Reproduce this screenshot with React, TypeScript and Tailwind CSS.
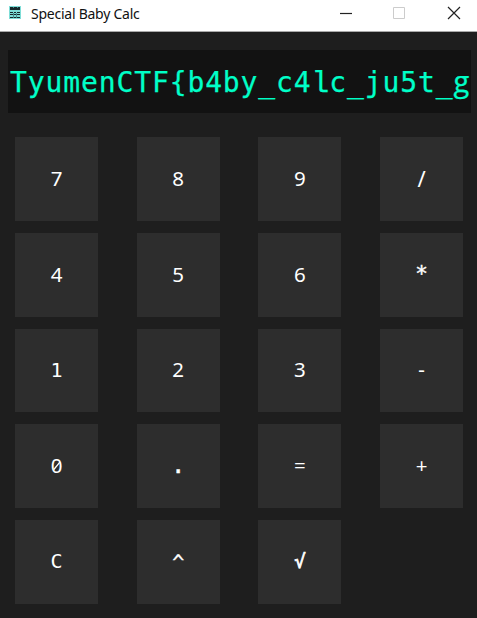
const keys = ["7", "8", "9", "/", "4", "5", "6", "*", "1", "2", "3", "-", "0", ".", "=", "+", "C", "^", "√"];

const glyphStyles: Record<string, string> = {
  "/": "font-['Noto_Sans'] text-[22px] -top-px",
  "*": "font-['DejaVu_Sans_Mono'] text-[21px] -top-px [-webkit-text-stroke:0.4px_currentColor]",
  "1": "font-['DejaVu_Sans_Mono'] text-[20px]",
  "-": "font-['DejaVu_Sans_Mono'] text-[20px]",
  ".": "font-['DejaVu_Sans_Mono'] text-[23px] -top-px [-webkit-text-stroke:0.5px_currentColor]",
  "^": "font-['DejaVu_Sans_Mono'] text-[20px] [-webkit-text-stroke:0.3px_currentColor]",
  C: "font-['DejaVu_Sans_Mono'] text-[20px] -top-px",
  "√": "font-['DejaVu_Sans_Mono'] text-[19px] -top-px [-webkit-text-stroke:0.7px_currentColor]",
};

function Key({ label }: { label: string }) {
  const glyph = glyphStyles[label] ?? "font-['Noto_Sans'] text-[20.5px] -top-px";
  return (
    <button className="flex h-[83.75px] w-[83px] items-center justify-center bg-[#2d2d2d] text-white">
      <span className={`relative leading-6 ${glyph}`}>
        {label}
        {label === "0" && (
          <svg className="absolute top-[5px] left-0 h-[15px] w-full" viewBox="0 0 11 15" fill="none" stroke="currentColor" strokeWidth="1.3">
            <path d="M2.5 11.5 8.7 3.8" />
          </svg>
        )}
      </span>
    </button>
  );
}

function TitleBar() {
  return (
    <header className="flex h-8 items-start border-b border-[#aaa] bg-white pl-[9px]">
      <svg className="mt-[6px] h-[13px] w-3" viewBox="0 0 12 13" shapeRendering="crispEdges">
        <path fill="#7eddd7" d="M0 0h12v13H0z" />
        <path fill="#17282b" d="M1 1h10v3H1zM1 6h3v1H1zM5 6h2v1H5zM8 6h3v1H8zM1 8h10v1H1zM1 11h3v1H1zM5 11h2v1H5zM8 11h3v1H8z" />
        <path fill="#478c8b" d="M4 1h1v1H4zM8 1h1v1H8zM4 7h1v5H4zM7 7h1v5H7z" />
      </svg>
      <h1 className="mt-[4px] ml-[10px] font-['Noto_Sans'] text-[14px] leading-5 tracking-[-0.25px] whitespace-nowrap text-[#111]">Special Baby Calc</h1>
      <svg className="mt-[6px] mr-[16px] ml-auto h-[14px] w-[121px]" viewBox="0 0 121 14" fill="none">
        <path d="M0 7.5h12" stroke="#222" strokeWidth="1.2" />
        <path d="M53.5 1.5h11v11h-11z" stroke="#ccc" />
        <path d="m108 1 12 12m0-12-12 12" stroke="#222" strokeWidth="1.2" />
      </svg>
    </header>
  );
}

export default function App() {
  return (
    <main className="h-[618px] w-[477px] overflow-hidden bg-[#1e1e1e]">
      <TitleBar />
      <div className="mt-[18px] ml-[8px] flex h-[63px] w-[463px] items-center overflow-hidden bg-[#121212] pt-[2px] pl-[2px] font-['DejaVu_Sans_Mono'] text-[28px] leading-none tracking-[0.88px] whitespace-nowrap text-[#00ffc8] [-webkit-text-stroke:0.25px_currentColor]">
        <p>
          TyumenCTF{"{"}b4by_c4
          <span className="font-['Liberation_Mono'] text-[29.5px] leading-none tracking-[0px]">l</span>
          c_ju5t_
          <span className="font-['Open_Sans'] text-[29px] leading-none tracking-normal">g</span>
        </p>
      </div>
      <div className="mt-6 ml-[15px] grid grid-cols-[repeat(4,83px)] gap-x-[38.7px] gap-y-3">
        {keys.map((label) => (
          <Key key={label} label={label} />
        ))}
      </div>
    </main>
  );
}
